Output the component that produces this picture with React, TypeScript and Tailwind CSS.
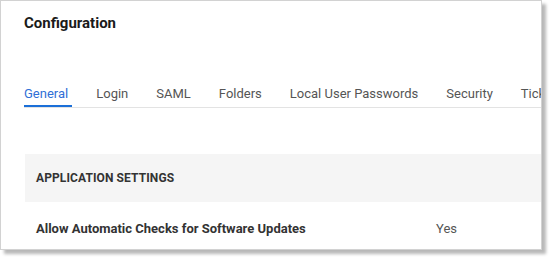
import React from 'react'

const tabs = ['General', 'Login', 'SAML', 'Folders', 'Local User Passwords', 'Security', 'Tickets']

export default function App() {
  return (
    <div className="w-[550px] h-[258px] bg-white" style={{ fontFamily: 'Roboto, "Liberation Sans", sans-serif' }}>
      <div className="w-[542px] h-[250px] border border-[#d2d2d2] bg-white overflow-hidden shadow-[4px_4px_3px_rgba(0,0,0,0.28)]">
        {/* Header */}
        <h1 className="pt-3 pl-[23px] text-[15px] leading-[20px] font-bold text-[#1a1a1a]">Configuration</h1>

        {/* Tabs */}
        <div className="mt-[48px] ml-[23px] flex gap-7 border-b border-[#e3e3e3] whitespace-nowrap">
          {tabs.map((tab, i) => (
            <div key={tab} className="relative h-[26px] shrink-0">
              <span className={`text-[13px] leading-[20px] ${i === 0 ? 'text-[#2f6fd6]' : 'text-[#555]'}`}>{tab}</span>
              {i === 0 && <div className="absolute bottom-0 left-0 -right-1 h-[2px] bg-[#1b6fd8]" />}
            </div>
          ))}
        </div>

        {/* Settings */}
        <div className="mt-[46px] ml-[24px]">
          <div className="h-[48px] bg-[#f5f5f5] flex items-center pl-[11px]">
            <span className="text-[12px] font-bold text-[#333] tracking-[0.1px]">APPLICATION SETTINGS</span>
          </div>
          <div className="pt-[17px] pl-[11px] flex text-[13px] leading-[20px]">
            <div className="w-[400px] font-bold text-[#333]">Allow Automatic Checks for Software Updates</div>
            <div className="text-[#555]">Yes</div>
          </div>
        </div>
      </div>
    </div>
  )
}
